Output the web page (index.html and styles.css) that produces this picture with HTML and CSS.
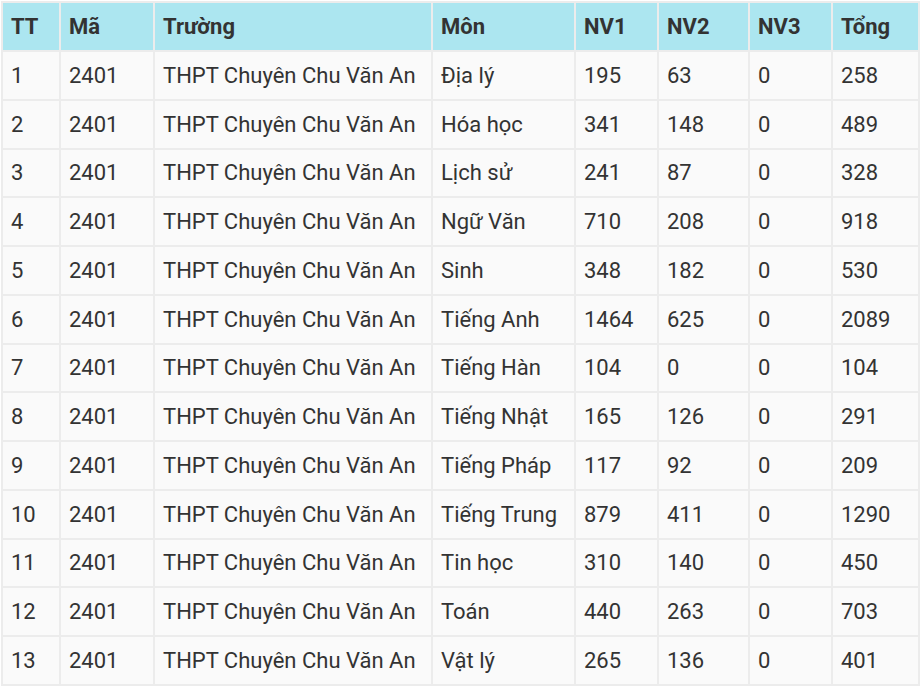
FILE: index.html
```html
<!DOCTYPE html>
<html lang="vi">
<head>
<meta charset="utf-8">
<link rel="stylesheet" href="styles.css">
</head>
<body>
<div class="wrap">
<table class="stats">
<colgroup>
<col class="c-tt"><col class="c-ma"><col class="c-truong"><col class="c-mon"><col class="c-nv1"><col class="c-nv2"><col class="c-nv3"><col class="c-tong">
</colgroup>
<thead>
<tr><th>TT</th><th>Mã</th><th>Trường</th><th>Môn</th><th>NV1</th><th>NV2</th><th>NV3</th><th>Tổng</th></tr>
</thead>
<tbody>
<tr><td>1</td><td>2401</td><td>THPT Chuyên Chu Văn An</td><td>Địa lý</td><td>195</td><td>63</td><td>0</td><td>258</td></tr>
<tr><td>2</td><td>2401</td><td>THPT Chuyên Chu Văn An</td><td>Hóa học</td><td>341</td><td>148</td><td>0</td><td>489</td></tr>
<tr><td>3</td><td>2401</td><td>THPT Chuyên Chu Văn An</td><td>Lịch sử</td><td>241</td><td>87</td><td>0</td><td>328</td></tr>
<tr><td>4</td><td>2401</td><td>THPT Chuyên Chu Văn An</td><td>Ngữ Văn</td><td>710</td><td>208</td><td>0</td><td>918</td></tr>
<tr><td>5</td><td>2401</td><td>THPT Chuyên Chu Văn An</td><td>Sinh</td><td>348</td><td>182</td><td>0</td><td>530</td></tr>
<tr><td>6</td><td>2401</td><td>THPT Chuyên Chu Văn An</td><td>Tiếng Anh</td><td>1464</td><td>625</td><td>0</td><td>2089</td></tr>
<tr><td>7</td><td>2401</td><td>THPT Chuyên Chu Văn An</td><td>Tiếng Hàn</td><td>104</td><td>0</td><td>0</td><td>104</td></tr>
<tr><td>8</td><td>2401</td><td>THPT Chuyên Chu Văn An</td><td>Tiếng Nhật</td><td>165</td><td>126</td><td>0</td><td>291</td></tr>
<tr><td>9</td><td>2401</td><td>THPT Chuyên Chu Văn An</td><td>Tiếng Pháp</td><td>117</td><td>92</td><td>0</td><td>209</td></tr>
<tr><td>10</td><td>2401</td><td>THPT Chuyên Chu Văn An</td><td>Tiếng Trung</td><td>879</td><td>411</td><td>0</td><td>1290</td></tr>
<tr><td>11</td><td>2401</td><td>THPT Chuyên Chu Văn An</td><td>Tin học</td><td>310</td><td>140</td><td>0</td><td>450</td></tr>
<tr><td>12</td><td>2401</td><td>THPT Chuyên Chu Văn An</td><td>Toán</td><td>440</td><td>263</td><td>0</td><td>703</td></tr>
<tr><td>13</td><td>2401</td><td>THPT Chuyên Chu Văn An</td><td>Vật lý</td><td>265</td><td>136</td><td>0</td><td>401</td></tr>
</tbody>
</table>
</div>
</body>
</html>
```

FILE: styles.css
```css
html, body {
  margin: 0;
  padding: 0;
  background: #ffffff;
}
.wrap {
  padding: 1px 0 0 1px;
}
.stats {
  border-collapse: collapse;
  table-layout: fixed;
  width: 917px;
  font-family: Roboto, "Noto Sans", sans-serif;
  font-size: 22px;
  color: #333333;
}
.c-tt { width: 58px; }
.c-ma { width: 94px; }
.c-truong { width: 278px; }
.c-mon { width: 143px; }
.c-nv1 { width: 83px; }
.c-nv2 { width: 91px; }
.c-nv3 { width: 83px; }
.c-tong { width: 87px; }
.stats th,
.stats td {
  border: 2px solid #ececec;
  text-align: left;
  padding: 0 8px;
  white-space: nowrap;
}
.stats th {
  background: #ace6f0;
  font-weight: 700;
  height: 47px;
  color: #333333;
}
.stats td {
  background: #fafafa;
  height: 46.75px;
}
```
